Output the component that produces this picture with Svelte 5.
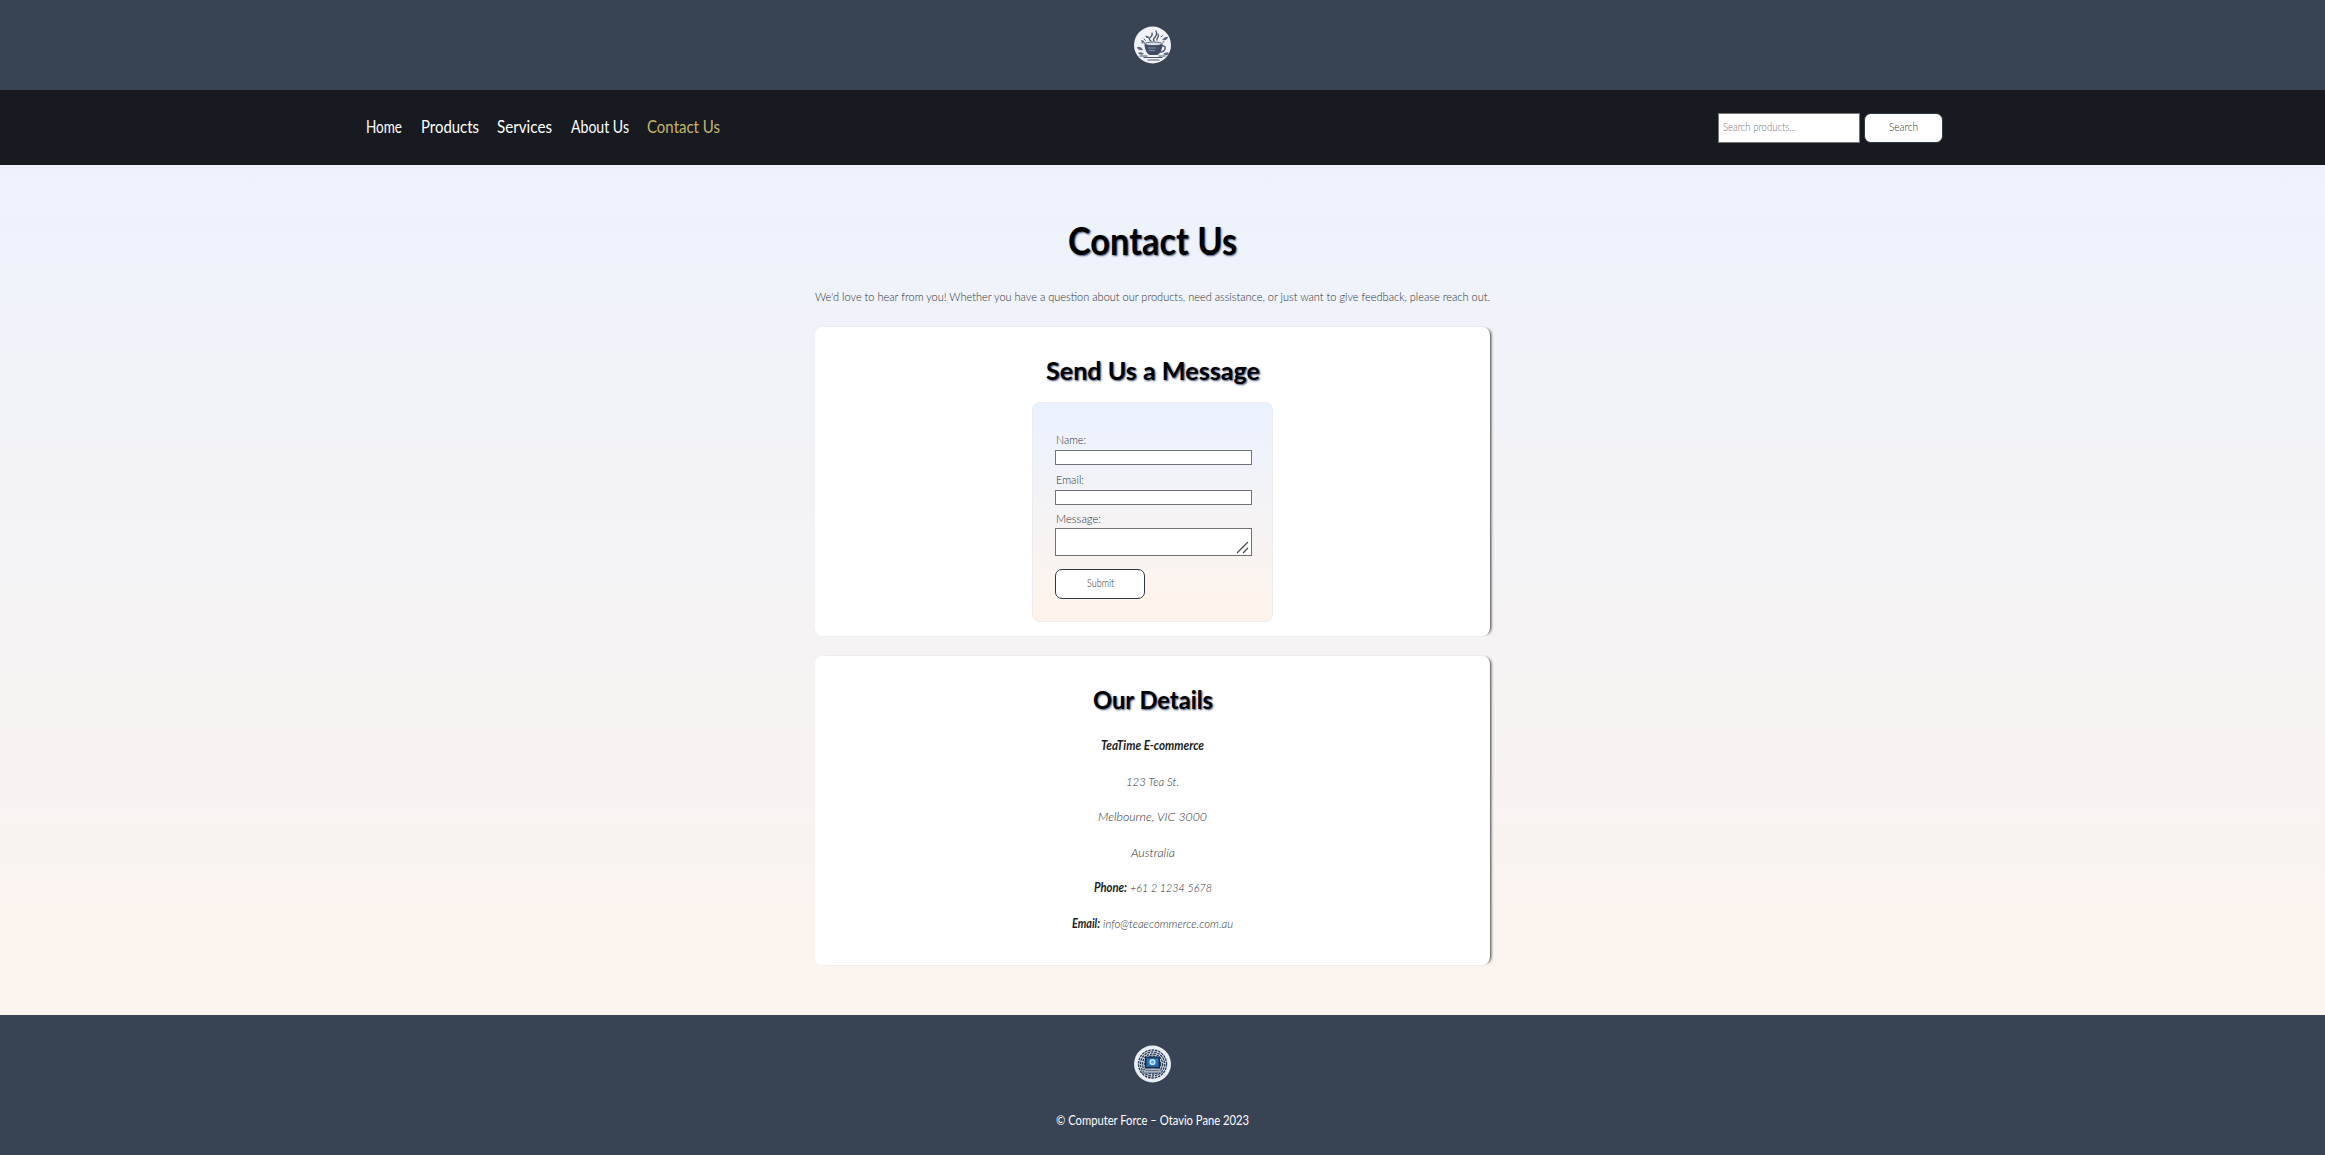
<script>
  const nav = [
    { text: 'Home', w: 36 },
    { text: 'Products', w: 58 },
    { text: 'Services', w: 55 },
    { text: 'About Us', w: 58 },
    { text: 'Contact Us', w: 73, active: true }
  ];
  const rings = [6, 8, 10, 12, 14];
</script>

{#snippet label(text, w, h, base, cls)}
  <svg class="label {cls}" width={w} height={h}>
    <text x="0" y={base} textLength={w} lengthAdjust="spacingAndGlyphs">{text}</text>
  </svg>
{/snippet}

<div class="page">
  <header>
    <svg class="logo" viewBox="0 0 38 38">
      <circle cx="18.5" cy="19" r="18.5" fill="#f1f3f8" />
      <g fill="none" stroke="#4a566c" stroke-linecap="round">
        <path d="M17 15c-5-3 3-4 1-8M20 15c-3-3 5-4 2-10M23 14c-1-2 3-3 1-6" stroke-width="1.3" />
        <path d="M28 20c5-1 4 6-2 6" stroke-width="1.4" />
        <path d="M10 31.500h18M14 34h11M6 30h7M25 30h6" stroke-width="1.200" />
        <path d="M10 13l1.500 1.500M27 11l1.500-1.500M8 17h1M29 16h1" />
      </g>
      <path d="M10.500 17.500h18c0 6-2 9.500-5 11.500h-8c-3-2-5-5.500-5-11.500z" fill="#414d64" />
      <ellipse cx="19.500" cy="17.800" rx="8.700" ry="1.800" fill="#dde2ec" stroke="#39465c" stroke-width=".8" />
      <path d="M14 22h8M15 24.500h6" stroke="#9aa5b8" stroke-width=".8" />
      <path
        fill="#5d6a80"
        d="M3 21q4-1 6 3q-5 1-6-3zM4 27q4-2 6 1q-4 2-6-1zM7 14q3 0 4 3q-4 0-4-3zM28 14q3-4 6-3q-1 4-6 3zM29 28q4-3 6-1q-2 4-6 1zM11 10q3-1 5 2q-4 1-5-2z"
      />
    </svg>
  </header>

  <nav>
    <div class="links">
      {#each nav as item}
        <a href="#top" class:active={item.active}>{@render label(item.text, item.w, 24, 17, 'nav-text')}</a>
      {/each}
    </div>
    <div class="search">
      <div class="search-box">{@render label('Search products...', 73, 20, 13, 'hint')}</div>
      <button class="search-btn">{@render label('Search', 29, 20, 12.5, 'small')}</button>
    </div>
  </nav>

  <main>
    <h1>{@render label('Contact Us', 169, 50, 37, 'title')}</h1>
    <p class="intro">
      {@render label("We'd love to hear from you! Whether you have a question about our products, need assistance, or just want to give feedback, please reach out.", 675, 20, 14, 'body')}
    </p>

    <section class="card">
      <h2>{@render label('Send Us a Message', 214, 34, 23, 'heading')}</h2>
      <form>
        <div class="lbl">{@render label('Name:', 30, 18, 12, 'body')}</div>
        <div class="field"></div>
        <div class="lbl">{@render label('Email:', 28, 18, 12, 'body')}</div>
        <div class="field"></div>
        <div class="lbl last">{@render label('Message:', 45, 18, 12, 'body')}</div>
        <div class="field area">
          <svg class="grip" viewBox="0 0 13 13"><path d="M1 12L12 1M7 12L12 7" /></svg>
        </div>
        <button type="button" class="submit">{@render label('Submit', 27, 18, 12.5, 'small')}</button>
      </form>
    </section>

    <section class="card">
      <h2>{@render label('Our Details', 120, 34, 23, 'heading')}</h2>
      <address>
        <div>{@render label('TeaTime E-commerce', 103, 20, 14, 'strong')}</div>
        <div>{@render label('123 Tea St.', 53, 20, 13.5, 'light')}</div>
        <div>{@render label('Melbourne, VIC 3000', 109, 20, 14, 'light')}</div>
        <div>{@render label('Australia', 44, 20, 13.5, 'light')}</div>
        <div>{@render label('Phone:', 33, 20, 14, 'strong')}{@render label('+61 2 1234 5678', 82, 20, 14, 'light')}</div>
        <div>{@render label('Email:', 28, 20, 13.5, 'strong')}{@render label('info@teaecommerce.com.au', 130, 20, 13.5, 'light')}</div>
      </address>
    </section>
  </main>

  <footer>
    <svg class="logo" viewBox="0 0 38 38">
      <circle cx="18.5" cy="19" r="18.5" fill="#e9edf4" />
      <g fill="none" stroke="#2c3f57" stroke-width="1.400" stroke-dasharray="2.600 .8">
        {#each rings as r}
          <circle cx="18.500" cy="19" {r} />
        {/each}
      </g>
      <rect x="11.500" y="12" width="14" height="10.500" fill="#1d4f86" stroke="#1c2e45" />
      <rect x="13" y="13.500" width="11" height="8" fill="#2671b8" />
      <circle cx="18.500" cy="17" r="2.400" fill="#5aa8e4" stroke="#cfeaff" stroke-width="1.400" />
      <path d="M11 23.500h15l2.500 4.500H8.500z" fill="#aab4c0" stroke="#34465c" stroke-width=".6" />
      <path d="M12 25.500h13" stroke="#5b6a7c" stroke-width=".8" />
    </svg>
    {@render label('© Computer Force – Otavio Pane 2023', 193, 20, 14, 'copy')}
  </footer>
</div>

<style>
  :global(body) {
    background: #384354;
  }
  .page {
    width: 100%;
    height: 1155px;
    overflow: hidden;
    display: flex;
    flex-direction: column;
    background: linear-gradient(#eaf2ff, #fff4eb);
    font-family: Lato, 'Open Sans', sans-serif;
  }
  * {
    box-sizing: border-box;
  }
  svg {
    display: block;
    flex: none;
  }
  .label {
    overflow: visible;
    fill: #2b2f36;
    font-size: 12.5px;
    font-weight: 300;
  }
  header,
  footer {
    background: #384354;
    display: flex;
    flex-direction: column;
    align-items: center;
    padding-right: 20px;
  }
  header {
    height: 90px;
    padding-top: 26px;
  }
  .logo {
    width: 38px;
    height: 38px;
  }
  nav {
    height: 75px;
    background: #171b21;
    padding: 0 382px 0 366px;
    display: flex;
    align-items: center;
    justify-content: space-between;
  }
  .links {
    display: flex;
    gap: 18.5px;
    padding-top: 1px;
  }
  a {
    text-decoration: none;
  }
  .nav-text {
    font-size: 16.5px;
    font-weight: 400;
    fill: #fff;
  }
  .active .nav-text {
    fill: #c8b46c;
  }
  .search {
    display: flex;
    gap: 4px;
  }
  .search-box {
    width: 142px;
    height: 30px;
    border: 1px solid #767676;
    background: #fff;
    padding: 4px;
  }
  button {
    display: flex;
    justify-content: center;
    height: 30px;
    background: #fff;
    border: 1px solid #2e3744;
    border-radius: 7px;
    padding: 4px 0 0;
    font: inherit;
  }
  .search-btn {
    width: 79px;
  }
  .hint {
    fill: #757575;
    font-size: 11px;
  }
  .small {
    font-size: 11px;
    fill: #2b2f36;
  }
  main {
    height: 850px;
    padding: 53px 20px 0 0;
    display: flex;
    flex-direction: column;
    align-items: center;
  }
  h1,
  h2,
  p {
    margin: 0;
  }
  .title {
    font-size: 38px;
    font-weight: 700;
    fill: #000;
    text-shadow: 1px 1px 2px #3a4c72;
  }
  .heading {
    font-size: 25px;
    font-weight: 700;
    fill: #000;
    text-shadow: 1px 1px 2px #3a4c72;
  }
  .intro {
    margin: 19px 0 20px;
  }
  .card {
    width: 675px;
    height: 309px;
    margin-bottom: 20px;
    padding-top: 30px;
    border-radius: 8px;
    background: #fff;
    box-shadow: 3px 0 3px -2px #333;
    display: flex;
    flex-direction: column;
    align-items: center;
  }
  form {
    width: 241px;
    height: 220px;
    margin-top: 11px;
    padding: 29px 21px 0 22px;
    border: 1px solid #ececf0;
    border-radius: 8px;
    background: linear-gradient(#eaf2ff, #fff4eb);
  }
  .lbl {
    height: 18px;
    padding-left: 1px;
  }
  .field {
    width: 197px;
    height: 15px;
    margin-bottom: 7px;
    border: 1px solid #707376;
    background: #fff;
  }
  .last {
    height: 17px;
    margin-top: -1px;
  }
  .area {
    height: 28px;
    display: flex;
    justify-content: flex-end;
    align-items: flex-end;
    padding: 1px 2px;
  }
  .grip {
    width: 13px;
    height: 13px;
    fill: none;
    stroke: #4a4a4a;
    stroke-width: 1.2;
  }
  .submit {
    width: 90px;
    margin-top: 13px;
  }
  address {
    margin-top: 16px;
    font-style: italic;
  }
  address div {
    height: 35.5px;
    display: flex;
    justify-content: center;
    gap: 3px;
  }
  .strong {
    font-weight: 700;
    fill: #1a1d22;
  }
  .light {
    fill: #2b2f36;
  }
  footer {
    height: 140px;
    padding-top: 30px;
    gap: 28px;
  }
  .copy {
    fill: #fff;
    font-size: 13px;
    font-weight: 400;
  }
</style>
